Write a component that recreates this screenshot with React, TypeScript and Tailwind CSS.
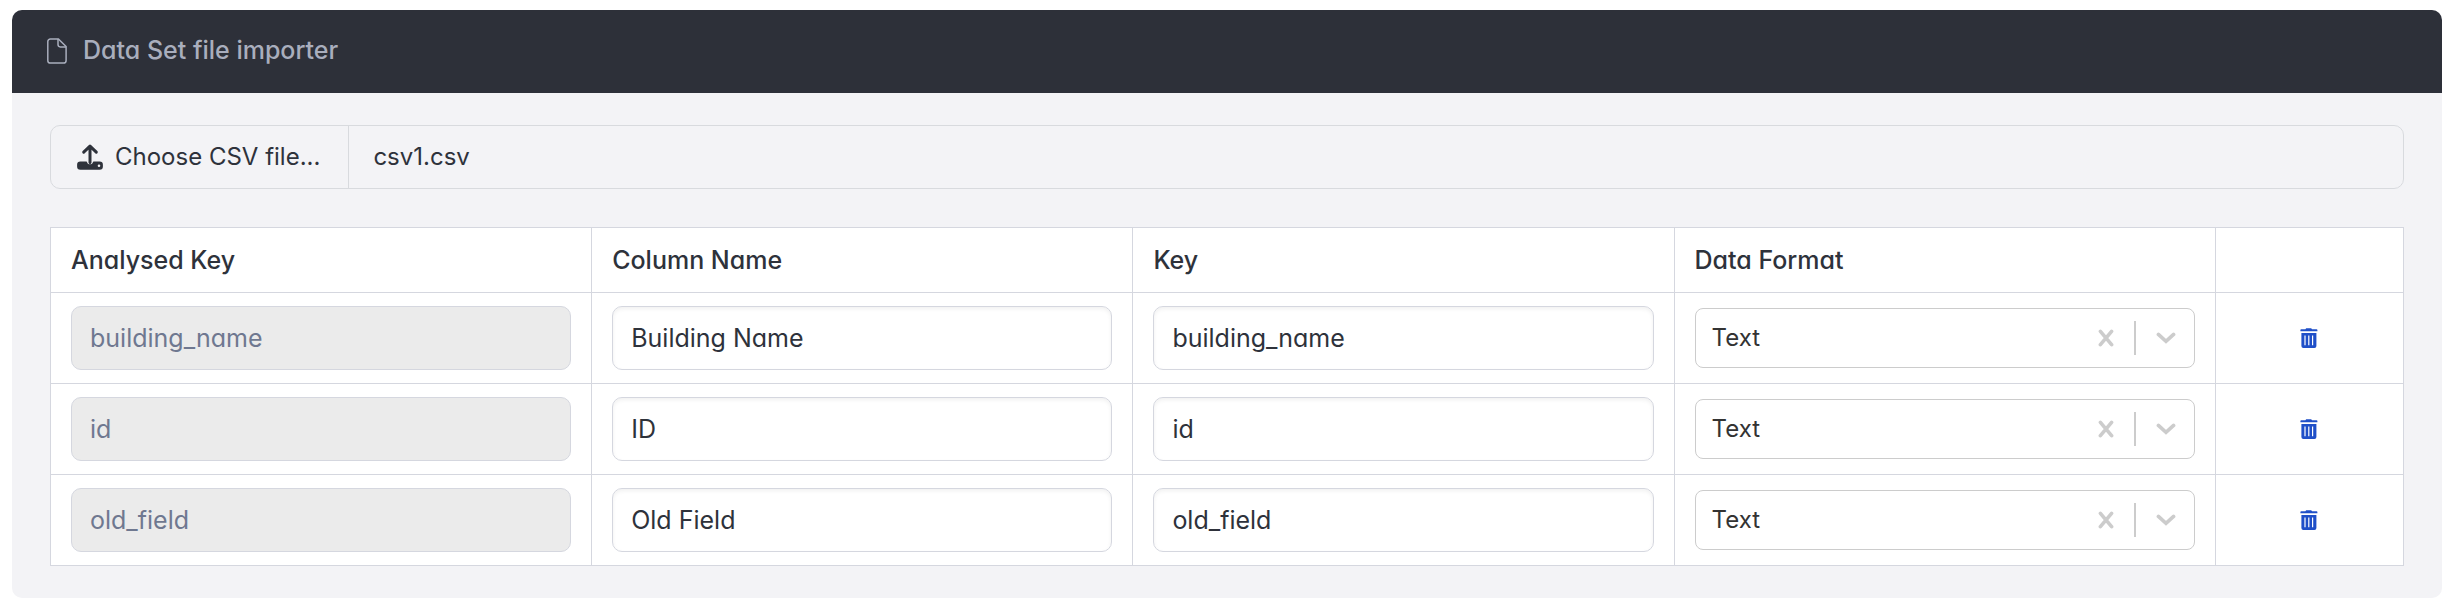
import { useState } from 'react'
import type { FunctionComponent } from 'react'

type Column = { id: number; analysed: string; name: string; key: string; format: string }

const initialColumns: Column[] = [
  { id: 1, analysed: 'building_name', name: 'Building Name', key: 'building_name', format: 'Text' },
  { id: 2, analysed: 'id', name: 'ID', key: 'id', format: 'Text' },
  { id: 3, analysed: 'old_field', name: 'Old Field', key: 'old_field', format: 'Text' },
]

const FileIcon = () => (
  <svg className="w-5 h-[26px]" viewBox="0 0 20 26" fill="none" stroke="currentColor" strokeWidth="1.5" aria-hidden="true">
    <path d="M3.4 .9h8l7.7 7.6v14a2.6 2.6 0 0 1-2.6 2.6H3.4a2.6 2.6 0 0 1-2.6-2.6v-19A2.6 2.6 0 0 1 3.4.9Z" />
    <path d="M11 1v5.6a2.3 2.3 0 0 0 2.3 2.3H19" />
  </svg>
)

const UploadIcon = () => (
  <svg className="w-[26px] h-[26px]" viewBox="0 0 26 26" fill="none" aria-hidden="true">
    <path
      fill="currentColor"
      fillRule="evenodd"
      d="M3.4 17.5h6.2a3.5 3.5 0 0 0 6.8 0h6.2a3.3 3.3 0 0 1 3.3 3.3v1.6a3.3 3.3 0 0 1-3.3 3.3H3.4a3.3 3.3 0 0 1-3.3-3.3v-1.6a3.3 3.3 0 0 1 3.3-3.3Zm18.6 2.9a1.3 1.3 0 1 0 0 2.6 1.3 1.3 0 0 0 0-2.6Z"
    />
    <path d="M13 18.5V3M6.7 8.2 13 2.1l6.3 6.1" stroke="currentColor" strokeWidth="3" strokeLinecap="round" strokeLinejoin="round" />
  </svg>
)

const TrashIcon = () => (
  <svg className="w-[18px] h-5" viewBox="0 0 18 20" fill="currentColor" aria-hidden="true">
    <path d="M1.2 1.2h4.2L6.2.3h5l.8.9h4.6a.8.8 0 0 1 .8.8v1.2H.4V2a.8.8 0 0 1 .8-.8Z" />
    <path
      fillRule="evenodd"
      d="M1.4 5h15v13a2 2 0 0 1-2 2h-11a2 2 0 0 1-2-2V5Zm3 2.4v9.8h1.2V7.4H4.4Zm3.8 0v9.8h1.2V7.4H8.2Zm3.8 0v9.8h1.2V7.4H12Z"
    />
  </svg>
)

const inputClass = 'block w-full h-16 px-[18px] border border-[#d5d7df] rounded-[10px] text-[25px]'
const thClass = 'px-5 pt-0.5 border border-[#d5d7df] text-left font-medium'
const tdClass = 'px-5 py-[13px] border border-[#d5d7df]'

const App: FunctionComponent = () => {
  const [columns, setColumns] = useState(initialColumns)

  const update = (id: number, changes: Partial<Column>) =>
    setColumns(columns.map(c => (c.id === id ? { ...c, ...changes } : c)))

  return (
    <div className="px-3 py-2.5 bg-white font-['Inter','Liberation_Sans',sans-serif] [font-feature-settings:'cv11'] text-[25px] text-[#2e323b]">
      <section className="overflow-hidden rounded-[10px] bg-[#f3f3f6]">
        <header className="flex items-center gap-4 px-[35px] pb-0.5 h-[83px] bg-[#2d3039] text-[#a9aebd]">
          <FileIcon />
          <h1 className="font-medium">Data Set file importer</h1>
        </header>

        <div className="px-[38px] py-8">
          <label className="flex items-stretch h-16 mb-[38px] border border-[#d8dade] rounded-[10px] text-2xl cursor-pointer">
            <input type="file" accept=".csv" className="sr-only" />
            <span className="flex items-center gap-3 pl-[26px] pr-7 border-r border-[#d8dade]">
              <UploadIcon />
              <span>Choose CSV file...</span>
            </span>
            <span className="flex items-center px-6">csv1.csv</span>
          </label>

          <table className="w-full table-fixed border-collapse bg-white">
            <thead>
              <tr className="h-[65px]">
                <th className={`${thClass} w-[23%]`}>Analysed Key</th>
                <th className={`${thClass} w-[23%]`}>Column Name</th>
                <th className={`${thClass} w-[23%]`}>Key</th>
                <th className={`${thClass} w-[23%]`}>Data Format</th>
                <th className={`${thClass} w-[8%]`} />
              </tr>
            </thead>
            <tbody>
              {columns.map(column => (
                <tr key={column.id}>
                  <td className={tdClass}>
                    <input
                      className={`${inputClass} bg-[#ebebeb] text-[#6f7890]`}
                      aria-label="Analysed Key"
                      value={column.analysed}
                      disabled
                    />
                  </td>
                  <td className={tdClass}>
                    <input
                      className={`${inputClass} shadow-[inset_0_2px_4px_rgba(0,0,0,0.06)]`}
                      aria-label="Column Name"
                      value={column.name}
                      onChange={e => update(column.id, { name: e.target.value })}
                    />
                  </td>
                  <td className={tdClass}>
                    <input
                      className={`${inputClass} shadow-[inset_0_2px_4px_rgba(0,0,0,0.06)]`}
                      aria-label="Key"
                      value={column.key}
                      onChange={e => update(column.id, { key: e.target.value })}
                    />
                  </td>
                  <td className={tdClass}>
                    <div className="flex items-center h-[60px] pr-[18px] border border-[#cccccc] rounded-lg text-[#cccccc]">
                      <select
                        className="grow self-stretch pl-4 appearance-none text-2xl text-[#333333]"
                        aria-label="Data Format"
                        value={column.format}
                        onChange={e => update(column.id, { format: e.target.value })}
                      >
                        <option value="" />
                        <option>Text</option>
                        <option>Number</option>
                        <option>Date</option>
                      </select>
                      <button aria-label="Clear" onClick={() => update(column.id, { format: '' })}>
                        <svg className="w-4 h-[18px]" viewBox="0 0 16 18" stroke="currentColor" strokeWidth="3.6" strokeLinecap="round">
                          <path d="m2.4 2.4 11.2 13.2M13.6 2.4 2.4 15.6" />
                        </svg>
                      </button>
                      <span className="w-0.5 h-[34px] mx-5 bg-[#cccccc]" />
                      <svg className="w-5 h-3" viewBox="0 0 20 12" fill="none" stroke="currentColor" strokeWidth="3.6" strokeLinecap="round" aria-hidden="true">
                        <path d="m2.4 2.4 7.6 7 7.6-7" />
                      </svg>
                    </div>
                  </td>
                  <td className={tdClass}>
                    <button
                      className="block mx-auto text-[#1f4fc8]"
                      aria-label={`Delete ${column.name}`}
                      onClick={() => setColumns(columns.filter(c => c.id !== column.id))}
                    >
                      <TrashIcon />
                    </button>
                  </td>
                </tr>
              ))}
            </tbody>
          </table>
        </div>
      </section>
    </div>
  )
}

export default App
